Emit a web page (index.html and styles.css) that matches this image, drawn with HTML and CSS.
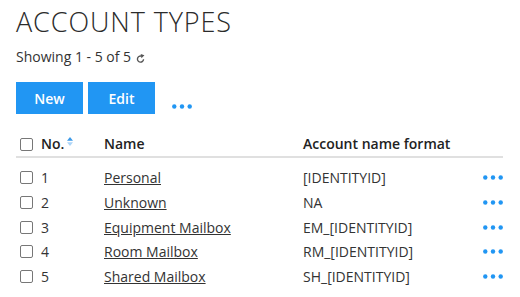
FILE: index.html
```html
<!DOCTYPE html>
<html>
<head>
<meta charset="utf-8">
<link rel="stylesheet" href="styles.css">
</head>
<body>
<div class="page">
  <h1 class="title">ACCOUNT TYPES</h1>
  <div class="showing">Showing 1 - 5 of 5 <svg class="refresh" viewBox="0 0 10 10" width="9" height="9"><path d="M8.4 5.8A3.4 3.4 0 1 1 5.8 2.3" fill="none" stroke="#555" stroke-width="1.5"/><path d="M5.2 0L9.4 1.4L6 4.6Z" fill="#555"/></svg></div>
  <div class="toolbar">
    <button class="btn">New</button>
    <button class="btn">Edit</button>
    <svg class="more more-bar" viewBox="0 0 20 5" width="20" height="5"><circle cx="2.3" cy="2.5" r="2.2"/><circle cx="10" cy="2.5" r="2.2"/><circle cx="17.7" cy="2.5" r="2.2"/></svg>
  </div>
  <div class="grid">
    <div class="row head">
      <div class="c-check"><span class="box"></span></div>
      <div class="c-no">No.<svg class="sort" viewBox="0 0 6 9" width="6" height="9"><path d="M0 3.8L3 0L6 3.8Z" fill="#3d9be9"/><path d="M0 5.2L3 9L6 5.2Z" fill="#acd5f8"/></svg></div>
      <div class="c-name">Name</div>
      <div class="c-fmt">Account name format</div>
      <div class="c-act"></div>
    </div>
    <div class="body">
      <div class="row">
        <div class="c-check"><span class="box"></span></div>
        <div class="c-no">1</div>
        <div class="c-name"><a href="#">Personal</a></div>
        <div class="c-fmt">[IDENTITYID]</div>
        <div class="c-act"><svg class="more" viewBox="0 0 20 5" width="20" height="5"><circle cx="2.3" cy="2.5" r="2.2"/><circle cx="10" cy="2.5" r="2.2"/><circle cx="17.7" cy="2.5" r="2.2"/></svg></div>
      </div>
      <div class="row">
        <div class="c-check"><span class="box"></span></div>
        <div class="c-no">2</div>
        <div class="c-name"><a href="#">Unknown</a></div>
        <div class="c-fmt">NA</div>
        <div class="c-act"><svg class="more" viewBox="0 0 20 5" width="20" height="5"><circle cx="2.3" cy="2.5" r="2.2"/><circle cx="10" cy="2.5" r="2.2"/><circle cx="17.7" cy="2.5" r="2.2"/></svg></div>
      </div>
      <div class="row">
        <div class="c-check"><span class="box"></span></div>
        <div class="c-no">3</div>
        <div class="c-name"><a href="#">Equipment Mailbox</a></div>
        <div class="c-fmt">EM_[IDENTITYID]</div>
        <div class="c-act"><svg class="more" viewBox="0 0 20 5" width="20" height="5"><circle cx="2.3" cy="2.5" r="2.2"/><circle cx="10" cy="2.5" r="2.2"/><circle cx="17.7" cy="2.5" r="2.2"/></svg></div>
      </div>
      <div class="row">
        <div class="c-check"><span class="box"></span></div>
        <div class="c-no">4</div>
        <div class="c-name"><a href="#">Room Mailbox</a></div>
        <div class="c-fmt">RM_[IDENTITYID]</div>
        <div class="c-act"><svg class="more" viewBox="0 0 20 5" width="20" height="5"><circle cx="2.3" cy="2.5" r="2.2"/><circle cx="10" cy="2.5" r="2.2"/><circle cx="17.7" cy="2.5" r="2.2"/></svg></div>
      </div>
      <div class="row">
        <div class="c-check"><span class="box"></span></div>
        <div class="c-no">5</div>
        <div class="c-name"><a href="#">Shared Mailbox</a></div>
        <div class="c-fmt">SH_[IDENTITYID]</div>
        <div class="c-act"><svg class="more" viewBox="0 0 20 5" width="20" height="5"><circle cx="2.3" cy="2.5" r="2.2"/><circle cx="10" cy="2.5" r="2.2"/><circle cx="17.7" cy="2.5" r="2.2"/></svg></div>
      </div>
    </div>
  </div>
</div>
</body>
</html>
```

FILE: styles.css
```css
html, body {
  margin: 0;
  padding: 0;
  background: #fff;
}
body {
  font-family: "Open Sans", "Liberation Sans", sans-serif;
  font-size: 14px;
  color: #333;
}
.page {
  padding: 6px 17px 0 16px;
}
.title {
  margin: 0;
  font-family: "Open Sans", sans-serif;
  font-weight: 300;
  font-size: 27px;
  line-height: 32px;
  letter-spacing: 0.9px;
  color: #2b2b2b;
}
.showing {
  margin-top: 10px;
  line-height: 18px;
  color: #333;
}
.refresh {
  vertical-align: -1px;
  margin-left: 1px;
}
.toolbar {
  margin-top: 16px;
  display: flex;
  align-items: flex-end;
  gap: 5px;
  height: 32px;
}
.btn {
  width: 67px;
  height: 32px;
  border: none;
  padding: 0;
  background: #2196f3;
  color: #fff;
  font-family: "Open Sans", sans-serif;
  font-weight: 600;
  font-size: 14px;
}
.more {
  fill: #2196f3;
  display: block;
}
.more-bar {
  margin: 0 0 5px 12px;
}
.grid {
  margin-top: 16px;
}
.row {
  display: grid;
  grid-template-columns: 25px 63px 199px 1fr 30px;
  align-items: center;
  height: 24.6px;
}
.row.head {
  height: 26px;
  border-bottom: 2px solid #e0e0e0;
  font-weight: 600;
  color: #222;
}
.body {
  padding-top: 7.7px;
}
.c-check {
  padding-left: 4px;
  display: flex;
  align-items: center;
}
.box {
  display: block;
  width: 11px;
  height: 11px;
  border: 1px solid #777;
  border-radius: 2px;
}
.row.head .box {
  margin-top: 2px;
}
.sort {
  margin-left: 3px;
  vertical-align: 3px;
}
.c-name a {
  color: #333;
  text-decoration: underline;
  text-underline-offset: 1px;
}
.c-act {
  display: flex;
  justify-content: flex-end;
}
```
